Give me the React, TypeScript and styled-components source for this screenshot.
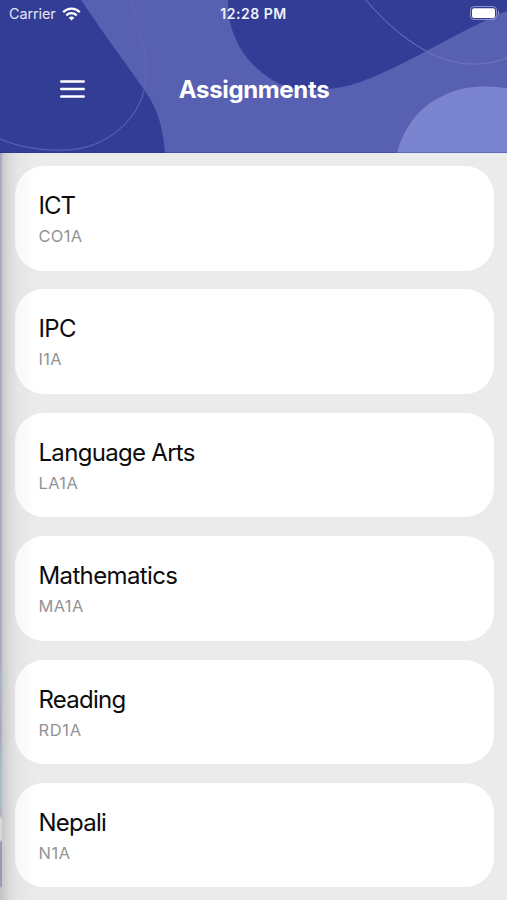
import React from 'react';
import styled, { createGlobalStyle } from 'styled-components';

const GlobalStyle = createGlobalStyle`
  * { box-sizing: border-box; }
  body { margin: 0; background: #ebebeb; font-family: Inter, "Liberation Sans", sans-serif; }
`;

const Screen = styled.div`
  position: relative;
  width: 507px;
  height: 900px;
  overflow: hidden;
  background: #ebebeb;
`;

const Header = styled.header`
  position: relative;
  height: 152.5px;
  overflow: hidden;
  color: #fff;
  background: #5860b1;
`;

const Artwork = styled.svg`
  position: absolute;
  inset: 0;
`;

const StatusBar = styled.div`
  position: relative;
  display: grid;
  grid-template-columns: 1fr auto 1fr;
  align-items: center;
  height: 27px;
  padding: 0 5px 0 9px;
`;

const Carrier = styled.div`
  display: flex;
  align-items: center;
  gap: 6px;
  font-size: 14.4px;
  letter-spacing: -0.08px;
  color: #e4e6f6;
`;

const Clock = styled.div`
  margin-right: 4px;
  font-size: 14px;
  font-weight: 600;
  letter-spacing: 0.5px;
  color: #f0f1fb;
`;

const BatteryIcon = styled.svg`
  justify-self: end;
`;

const TitleBar = styled.div`
  position: relative;
  display: grid;
  grid-template-columns: 1fr auto 1fr;
  align-items: center;
  height: 124px;
  padding-left: 60px;
  padding-right: 59px;
`;

const MenuButton = styled.button`
  display: flex;
  width: 25px;
  padding: 0;
  border: 0;
  background: none;
`;

const PageTitle = styled.h1`
  margin: 2px 0 0;
  font-size: 24px;
  line-height: 30px;
  font-weight: 700;
  letter-spacing: -0.35px;
`;

const CourseList = styled.main`
  display: flex;
  flex-direction: column;
  gap: 18.9px;
  padding: 13.5px 13.5px 0 14.5px;
`;

const CourseCard = styled.article`
  flex: none;
  height: 104.5px;
  padding: 24px 24.5px 0 24px;
  border-radius: 29px;
  background: #fff;
`;

const CourseName = styled.h2<{ $tracking: number }>`
  margin: 0;
  font-size: 24px;
  line-height: 31px;
  font-weight: 400;
  letter-spacing: ${(p) => p.$tracking}px;
  color: #0c0c0c;
`;

const CourseCode = styled.p<{ $tracking: number }>`
  margin: 5px 0 0;
  font-size: 16.4px;
  line-height: 20px;
  letter-spacing: ${(p) => p.$tracking}px;
  color: #929397;
`;

const EdgeShadow = styled.div`
  position: absolute;
  top: 152px;
  bottom: 0;
  left: 0;
  width: 36px;
  pointer-events: none;
  background: linear-gradient(to right, rgba(40, 42, 55, 0.19) 2px, rgba(40, 42, 55, 0.09) 9px, rgba(40, 42, 55, 0.03) 17px, transparent 36px);
`;

const DrawerSliver = styled.div`
  position: absolute;
  top: 153px;
  bottom: 0;
  left: 0;
  width: 2px;
  background: linear-gradient(
    #aaa9ca 0 507px, #a9b6ca 525px, #a9a9c7 580px, #a3bfc4 610px 655px,
    #bda9ba 663px, #d9d9dc 666px 686px, #9c98b8 690px 733px, #c5c5cc 735px
  );
`;

const courses = [
  { name: 'ICT', code: 'CO1A', nameTracking: -1, codeTracking: 0.4 },
  { name: 'IPC', code: 'I1A', nameTracking: -0.6, codeTracking: 0.4 },
  { name: 'Language Arts', code: 'LA1A', nameTracking: -0.7, codeTracking: 0.4 },
  { name: 'Mathematics', code: 'MA1A', nameTracking: -0.63, codeTracking: 0.4 },
  { name: 'Reading', code: 'RD1A', nameTracking: -0.75, codeTracking: 0.7 },
  { name: 'Nepali', code: 'N1A', nameTracking: -0.75, codeTracking: 0.6 },
];

export default function App() {
  return (
    <Screen>
      <GlobalStyle />
      <Header>
        <Artwork width="507" height="153" viewBox="0 0 507 153" fill="none">
          <path d="M0 0H81C101 30 124 61 143 88C157 107 163 126 165 153H0Z" fill="#333d95" />
          <path d="M228 0C227 34 245 64 274 81C295 92 325 92 351 85C400 70 449 35 507 11V0Z" fill="#333d95" />
          <path d="M397 153C407 112 442 87 482 86.500Q496 86 507 88.500V153Z" fill="#7b84ce" />
          <path d="M130 0C138 27 147 51 146 76C145 118 105 150 65 150C42 151 19 147 0 139" stroke="#6169b4" />
          <path d="M366 0C387 25 410 44 436 56C461 67 487 66 507 58" stroke="#7078bd" />
          <path d="M0 152.500H507" stroke="#2c3291" strokeOpacity=".35" />
        </Artwork>
        <StatusBar>
          <Carrier>
            Carrier
            <svg width="19" height="14" viewBox="0 0 19 14" fill="none" stroke="#fff" strokeWidth="2.300">
              <path d="M1.200 5.100C6 .400 13 .400 17.800 5.100" />
              <path d="M4.300 8.300C7.300 5.500 11.700 5.500 14.700 8.300" />
              <path d="M6.700 10.700Q9.500 8.400 12.300 10.700L9.500 13.500Z" fill="#fff" stroke="none" />
            </svg>
          </Carrier>
          <Clock>12:28 PM</Clock>
          <BatteryIcon width="32" height="15" viewBox="0 0 32 15" fill="none">
            <rect x="0.500" y="0.500" width="26" height="13" rx="3.500" stroke="#8b91ca" />
            <rect x="2" y="2.200" width="23" height="9.800" rx="2" fill="#fff" />
            <path d="M28 4.500Q30.500 7.200 28 9.500Z" fill="#9da3d4" />
          </BatteryIcon>
        </StatusBar>
        <TitleBar>
          <MenuButton aria-label="Open menu">
            <svg width="25" height="20" viewBox="0 0 25 20" stroke="#fff" strokeWidth="2.500" strokeLinecap="round">
              <path d="M1.300 2.500H23.700M1.300 10H23.700M1.300 17.500H23.700" />
            </svg>
          </MenuButton>
          <PageTitle>Assignments</PageTitle>
        </TitleBar>
      </Header>
      <CourseList>
        {courses.map((course) => (
          <CourseCard key={course.name}>
            <CourseName $tracking={course.nameTracking}>{course.name}</CourseName>
            <CourseCode $tracking={course.codeTracking}>{course.code}</CourseCode>
          </CourseCard>
        ))}
      </CourseList>
      <EdgeShadow />
      <DrawerSliver />
    </Screen>
  );
}
